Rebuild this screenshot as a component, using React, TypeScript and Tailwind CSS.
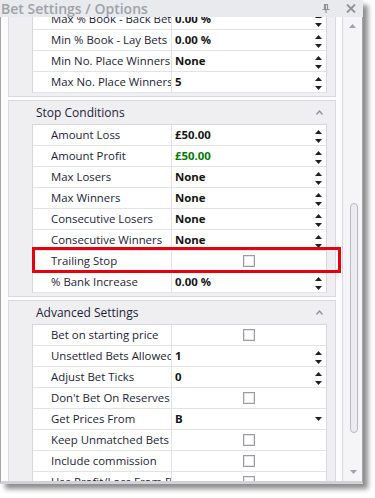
import type { ReactNode } from 'react';

type Kind = 'spin' | 'check' | 'drop';

type RowProps = {
  label: string;
  value?: string;
  kind: Kind;
  green?: boolean;
};

const Up = () => (
  <svg width="7" height="4" viewBox="0 0 7 4">
    <path d="M3.5 0L7 4H0z" fill="#1f1f1f" />
  </svg>
);

const Down = () => (
  <svg width="7" height="4" viewBox="0 0 7 4">
    <path d="M0 0H7L3.5 4z" fill="#1f1f1f" />
  </svg>
);

function Row({ label, value, kind, green }: RowProps) {
  return (
    <div className="flex h-[21px] border-b border-[#e2e2e7]">
      <div className="w-[139px] shrink-0 overflow-hidden whitespace-nowrap border-r border-[#e2e2e7] bg-white pl-[18px] leading-[20px] text-[#1d1d36]">
        { label }
      </div>
      { kind === 'check' ? (
        <div className="flex flex-1 items-center justify-center bg-white">
          <div className="h-[12px] w-[12px] border border-[#9c9ca0] bg-white shadow-[inset_0_0_0_1px_#e4e4e8]" />
        </div>
      ) : (
        <div className="flex min-w-0 flex-1 items-center bg-white pl-[3px] pr-[4px]">
          <span className={ `font-bold leading-[20px] ${ green ? 'text-[#007a00]' : 'text-[#141414]' }` }>{ value }</span>
          { kind === 'spin' ? (
            <div className="ml-auto flex h-full flex-col gap-[5px] pt-[5px]">
              <Up/>
              <Down/>
            </div>
          ) : (
            <div className="ml-auto flex items-center">
              <Down/>
            </div>
          ) }
        </div>
      ) }
    </div>
  );
}

function Group({ title, children, className = '' }: { title?: string; children: ReactNode; className?: string }) {
  return (
    <div className={ `border border-[#dadade] bg-[#efeff2] pb-[3px] pl-[23px] pr-[8px] ${ className }` }>
      { title && (
        <div className="flex h-[23px] items-center pl-[4px] pr-[4px]">
          <span className="text-[12px] text-[#1d1d36]">{ title }</span>
          <svg className="ml-auto" width="7" height="5" viewBox="0 0 7 5">
            <path d="M0.5 4.5L3.5 1L6.5 4.5" fill="none" stroke="#8e8e98" strokeWidth="1.3" />
          </svg>
        </div>
      ) }
      <div className={ `border-x border-[#d7d7dc] ${ title ? 'border-t' : '' }` }>
        { children }
      </div>
    </div>
  );
}

export default function App() {
  return (
    <div className="relative h-[498px] w-[375px] overflow-hidden bg-white font-['Open_Sans',sans-serif] text-[11.4px]">
      <div className="w-[363px] shadow-[5px_5px_5px_rgba(0,0,0,0.45)]">
        {/* title bar */ }
        <div className="relative z-10 flex h-[17px] items-center bg-[#e8eaed] pl-[1px] pr-[7px]">
          <span className="text-[14px] font-semibold leading-[17px] text-[#9ea2a9]">Bet Settings / Options</span>
          <svg className="ml-auto mr-[16px]" width="8" height="9" viewBox="0 0 8 9">
            <path d="M2 0.5H6M2.5 0.5V5M5.5 0.5V5M0.5 5.5H7.5M4 5.5V9" fill="none" stroke="#8d9199" strokeWidth="1.2" />
            <rect x="2.5" y="0.5" width="1.5" height="5" fill="#8d9199" />
          </svg>
          <svg width="10" height="9" viewBox="0 0 10 9">
            <path d="M1 0.5L9 8.5M9 0.5L1 8.5" fill="none" stroke="#8d9199" strokeWidth="1.8" />
          </svg>
        </div>

        {/* body */ }
        <div className="flex h-[467px] border-x border-b-[3px] border-x-[#a6a6aa] border-b-[#d2d2d6]">
          <div className="w-[341px] shrink-0 overflow-hidden bg-[#fcfcfc] pl-[7px]">
            <div className="-mt-[8px] flex w-[328px] flex-col gap-[3px]">
              <Group className="border-t-0">
                <Row label="Max % Book - Back Bet" value="0.00 %" kind="spin"/>
                <Row label="Min % Book - Lay Bets" value="0.00 %" kind="spin"/>
                <Row label="Min No. Place Winners" value="None" kind="spin"/>
                <Row label="Max No. Place Winners" value="5" kind="spin"/>
              </Group>
              <Group title="Stop Conditions">
                <Row label="Amount Loss" value="£50.00" kind="spin"/>
                <Row label="Amount Profit" value="£50.00" kind="spin" green/>
                <Row label="Max Losers" value="None" kind="spin"/>
                <Row label="Max Winners" value="None" kind="spin"/>
                <Row label="Consecutive Losers" value="None" kind="spin"/>
                <Row label="Consecutive Winners" value="None" kind="spin"/>
                <Row label="Trailing Stop" kind="check"/>
                <Row label="% Bank Increase" value="0.00 %" kind="spin"/>
              </Group>
              <Group title="Advanced Settings">
                <Row label="Bet on starting price" kind="check"/>
                <Row label="Unsettled Bets Allowed" value="1" kind="spin"/>
                <Row label="Adjust Bet Ticks" value="0" kind="spin"/>
                <Row label="Don't Bet On Reserves" kind="check"/>
                <Row label="Get Prices From" value="B" kind="drop"/>
                <Row label="Keep Unmatched Bets" kind="check"/>
                <Row label="Include commission" kind="check"/>
                <Row label="Use Profit/Loss From Bet" kind="check"/>
              </Group>
            </div>
          </div>

          {/* scrollbar */ }
          <div className="flex w-[20px] flex-col items-center border-l border-[#d6d6da] bg-[#f5f5f7]">
            <svg className="mt-[7px]" width="7" height="4" viewBox="0 0 7 4">
              <path d="M3.5 0L7 4H0z" fill="#a2a2aa" />
            </svg>
            <div className="ml-[2px] mt-[175px] h-[230px] w-[8px] rounded-[4px] border border-[#b9b9be] bg-[#ececf0]" />
            <svg className="ml-[2px] mt-[37px]" width="7" height="4" viewBox="0 0 7 4">
              <path d="M0 0H7L3.5 4z" fill="#a2a2aa" />
            </svg>
          </div>
        </div>
      </div>

      {/* highlight */ }
      <div className="absolute left-[32px] top-[247px] h-[26px] w-[309px] border-[3px] border-[#e4000f]" />
    </div>
  );
}
